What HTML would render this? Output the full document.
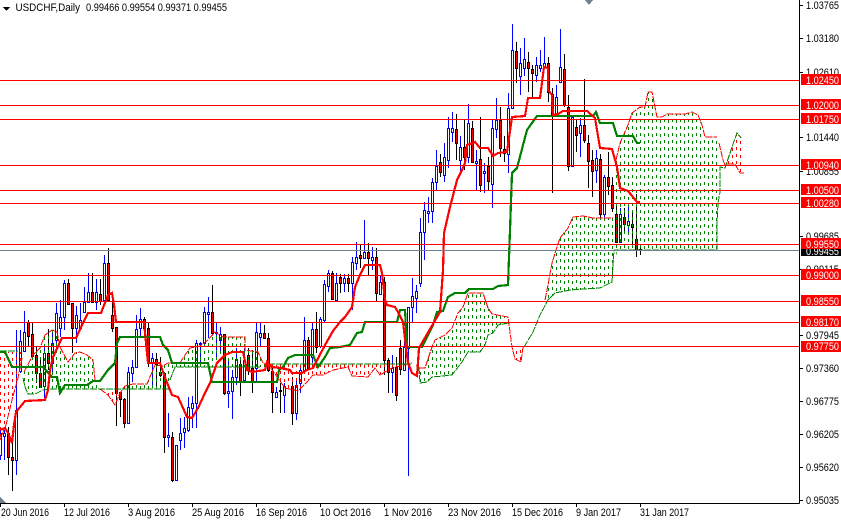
<!DOCTYPE html>
<html><head><meta charset="utf-8"><style>
html,body{margin:0;padding:0;background:#fff}
svg{display:block}
text{font-family:"Liberation Sans",sans-serif;font-size:11px;fill:#000}
.w{fill:#fff}
</style></head><body>
<svg width="841" height="520" viewBox="0 0 841 520" xmlns="http://www.w3.org/2000/svg" shape-rendering="crispEdges">
<defs>
<pattern id="g" width="8" height="7" patternUnits="userSpaceOnUse"><rect x="0" y="0" width="1" height="3" fill="#008000"/><rect x="4" y="1" width="1" height="3" fill="#008000"/></pattern>
<pattern id="r" width="8" height="7" patternUnits="userSpaceOnUse"><rect x="0" y="0" width="1" height="3" fill="#ff0000"/><rect x="4" y="1" width="1" height="3" fill="#ff0000"/></pattern>
</defs>
<rect width="841" height="520" fill="#fff"/>
<!-- wicks -->
<path fill="none" stroke="#0000ff" d="M0.5 427V460M4.5 430V460M16.5 330V475M20.5 330V373M24.5 311V352M44.5 347V398M52.5 330V373M56.5 303V348M60.5 300V337M64.5 280V330M76.5 306V343M80.5 303V328M84.5 287V313M88.5 273V303M96.5 279V310M104.5 255V300M128.5 367V423M132.5 360V382M136.5 315V363M140.5 308V338M152.5 353V387M168.5 413V447M176.5 445V481M180.5 418V450M184.5 417V448M188.5 397V432M192.5 396V428M196.5 340V428M200.5 342V363M204.5 307V345M208.5 297V338M216.5 323V357M220.5 327V352M228.5 360V408M232.5 370V419M236.5 348V385M244.5 348V382M256.5 323V382M260.5 323V347M276.5 387V397M284.5 383V413M296.5 380V420M300.5 365V393M304.5 317V373M312.5 323V363M320.5 317V348M324.5 280V322M328.5 270V292M336.5 273V302M344.5 274V292M352.5 257V310M356.5 242V270M364.5 220V257M372.5 247V270M380.5 275V295M392.5 355V393M404.5 338V370M408.5 307V476M412.5 278V322M416.5 285V313M420.5 218V287M424.5 202V260M428.5 197V223M432.5 178V223M436.5 150V190M444.5 143V182M448.5 117V168M452.5 112V142M460.5 136V175M468.5 104V163M476.5 150V190M484.5 163V193M492.5 120V208M496.5 98V138M508.5 93V173M512.5 24V108M520.5 48V95M524.5 38V76M536.5 57V82M540.5 50V72M544.5 37V68M556.5 85V115M560.5 29V83M572.5 117V166M580.5 118V157M596.5 150V183M604.5 175V220M620.5 208V243M628.5 203V235"/>
<path fill="none" stroke="#000" d="M8.5 427V475M12.5 433V491M28.5 320V347M32.5 322V357M36.5 347V383M40.5 357V388M48.5 329V370M68.5 279V305M72.5 303V353M92.5 273V302M100.5 279V305M108.5 248V300M112.5 300V332M116.5 327V426M120.5 392V417M124.5 398V428M144.5 317V338M148.5 323V367M156.5 353V387M160.5 357V377M164.5 373V453M172.5 432V482M212.5 285V335M224.5 334V395M240.5 360V396M248.5 348V375M252.5 350V393M264.5 325V338M268.5 333V372M272.5 367V413M280.5 383V413M292.5 377V425M308.5 337V368M316.5 312V353M332.5 271V300M340.5 274V293M348.5 274V292M360.5 245V268M368.5 243V275M376.5 248V302M384.5 277V375M388.5 358V393M396.5 357V401M400.5 340V375M440.5 154V177M456.5 114V160M464.5 120V170M472.5 121V163M480.5 117V192M488.5 157V190M500.5 107V157M504.5 136V162M516.5 42V83M528.5 52V92M532.5 65V97M548.5 57V102M552.5 88V193M564.5 54V107M568.5 95V171M576.5 120V152M584.5 79V143M588.5 135V188M592.5 150V197M600.5 154V220M608.5 152V195M612.5 177V212M616.5 205V243M624.5 208V233M632.5 213V245M636.5 194V257M640.5 245V255"/>
<!-- bodies -->
<path fill="#fff" stroke="#0000ff" d="M-.5 433.5h2v22h-2zM3.5 433.5h2v3h-2zM15.5 410.5h2v50h-2zM19.5 341.5h2v30h-2zM23.5 332.5h2v19h-2zM43.5 353.5h2v33h-2zM51.5 343.5h2v20h-2zM55.5 313.5h2v27h-2zM59.5 317.5h2v11h-2zM63.5 283.5h2v34h-2zM75.5 315.5h2v13h-2zM79.5 320.5h2v8h-2zM83.5 302.5h2v10h-2zM87.5 292.5h2v10h-2zM95.5 292.5h2v10h-2zM103.5 263.5h2v37h-2zM127.5 372.5h2v51h-2zM131.5 367.5h2v6h-2zM135.5 329.5h2v38h-2zM139.5 319.5h2v9h-2zM151.5 358.5h2v5h-2zM167.5 435.5h2v2h-2zM175.5 445.5h2v35h-2zM179.5 433.5h2v7h-2zM183.5 428.5h2v4h-2zM187.5 407.5h2v23h-2zM191.5 403.5h2v5h-2zM195.5 343.5h2v60h-2zM199.5 343.5h2v1h-2zM203.5 312.5h2v31h-2zM207.5 312.5h2v2h-2zM215.5 332.5h2v1h-2zM219.5 334.5h2v6h-2zM227.5 391.5h2v2h-2zM231.5 377.5h2v14h-2zM235.5 359.5h2v18h-2zM243.5 360.5h2v20h-2zM255.5 332.5h2v36h-2zM259.5 333.5h2v4h-2zM275.5 392.5h2v5h-2zM283.5 386.5h2v9h-2zM295.5 385.5h2v28h-2zM299.5 370.5h2v13h-2zM303.5 340.5h2v30h-2zM311.5 329.5h2v28h-2zM319.5 319.5h2v27h-2zM323.5 284.5h2v36h-2zM327.5 273.5h2v13h-2zM335.5 283.5h2v17h-2zM343.5 278.5h2v5h-2zM351.5 262.5h2v21h-2zM355.5 257.5h2v6h-2zM363.5 252.5h2v6h-2zM371.5 257.5h2v3h-2zM379.5 282.5h2v12h-2zM391.5 368.5h2v4h-2zM403.5 347.5h2v23h-2zM407.5 307.5h2v41h-2zM411.5 296.5h2v11h-2zM415.5 291.5h2v7h-2zM419.5 232.5h2v51h-2zM423.5 210.5h2v22h-2zM427.5 211.5h2v2h-2zM431.5 182.5h2v29h-2zM435.5 166.5h2v16h-2zM443.5 157.5h2v18h-2zM447.5 128.5h2v32h-2zM451.5 128.5h2v4h-2zM459.5 147.5h2v13h-2zM467.5 123.5h2v34h-2zM475.5 161.5h2v2h-2zM483.5 171.5h2v2h-2zM491.5 128.5h2v56h-2zM495.5 120.5h2v9h-2zM507.5 108.5h2v46h-2zM511.5 50.5h2v58h-2zM519.5 63.5h2v13h-2zM523.5 59.5h2v9h-2zM535.5 65.5h2v10h-2zM539.5 65.5h2v3h-2zM543.5 63.5h2v3h-2zM555.5 97.5h2v16h-2zM559.5 67.5h2v15h-2zM571.5 117.5h2v49h-2zM579.5 125.5h2v8h-2zM595.5 158.5h2v12h-2zM603.5 177.5h2v37h-2zM619.5 214.5h2v28h-2zM627.5 221.5h2v4h-2z"/>
<path fill="#ff0000" stroke="#000" d="M7.5 433.5h2v24h-2zM11.5 457.5h2v3h-2zM27.5 322.5h2v14h-2zM31.5 334.5h2v22h-2zM35.5 355.5h2v18h-2zM39.5 373.5h2v14h-2zM47.5 353.5h2v10h-2zM67.5 283.5h2v21h-2zM71.5 303.5h2v25h-2zM91.5 292.5h2v10h-2zM99.5 294.5h2v7h-2zM107.5 263.5h2v37h-2zM111.5 315.5h2v13h-2zM115.5 327.5h2v66h-2zM119.5 392.5h2v7h-2zM123.5 399.5h2v24h-2zM143.5 319.5h2v9h-2zM147.5 328.5h2v35h-2zM155.5 359.5h2v5h-2zM159.5 372.5h2v3h-2zM163.5 373.5h2v64h-2zM171.5 437.5h2v43h-2zM211.5 312.5h2v21h-2zM223.5 334.5h2v59h-2zM239.5 364.5h2v17h-2zM247.5 355.5h2v15h-2zM251.5 368.5h2v14h-2zM263.5 333.5h2v5h-2zM267.5 338.5h2v32h-2zM271.5 371.5h2v21h-2zM279.5 390.5h2v1h-2zM291.5 386.5h2v27h-2zM307.5 340.5h2v28h-2zM315.5 329.5h2v18h-2zM331.5 273.5h2v26h-2zM339.5 277.5h2v6h-2zM347.5 278.5h2v5h-2zM359.5 255.5h2v3h-2zM367.5 252.5h2v6h-2zM375.5 257.5h2v36h-2zM383.5 282.5h2v78h-2zM387.5 360.5h2v12h-2zM395.5 367.5h2v28h-2zM399.5 348.5h2v21h-2zM439.5 162.5h2v10h-2zM455.5 129.5h2v14h-2zM463.5 147.5h2v10h-2zM471.5 128.5h2v34h-2zM479.5 159.5h2v26h-2zM487.5 166.5h2v15h-2zM499.5 120.5h2v28h-2zM503.5 149.5h2v4h-2zM515.5 51.5h2v17h-2zM527.5 62.5h2v6h-2zM531.5 69.5h2v4h-2zM547.5 63.5h2v29h-2zM551.5 94.5h2v21h-2zM563.5 69.5h2v36h-2zM567.5 107.5h2v59h-2zM575.5 127.5h2v8h-2zM583.5 125.5h2v15h-2zM587.5 143.5h2v18h-2zM591.5 160.5h2v11h-2zM599.5 159.5h2v55h-2zM607.5 177.5h2v9h-2zM611.5 185.5h2v23h-2zM615.5 214.5h2v28h-2zM623.5 217.5h2v7h-2zM631.5 224.5h2v3h-2zM635.5 239.5h2v11h-2zM639.5 249.5h2v1h-2z"/>
<!-- cloud fills -->
<path fill="url(#r)" d="M0 352H22V358L18 378 12 400 6 425 0 440Z"/>
<path fill="url(#g)" d="M24 372L33 355 40 348 45 335 52 330 57 332 60 347 68 362 75 353 80 352 87 355 93 360 95 380 100 389H53L43 390 35 394H28L25 387 23 378Z"/>
<path fill="url(#r)" d="M100 389L108 395 115 405 120 393 125 386V389Z"/>
<path fill="url(#g)" d="M125 386L133 384H147L155 365 163 366 168 363H180L183 358 190 348 200 346 208 340 215 332 223 337H245V350L258 352 263 363 270 367H178L170 375 167 389H125Z"/>
<path fill="url(#r)" d="M268 364H412L392 368 380 375 375 368 368 377 352 376 348 367 333 370 323 375H313L307 382 298 391 285 388 268 367Z"/>
<path fill="url(#g)" d="M415 365L419 368H425L432 347 435 340 445 335 452 328 458 313 463 307 468 293H483L488 308 492 314 508 317 510 332 508 323 498 325 493 333 488 335 485 345 480 352H468L462 362 452 375 443 376 432 377 427 382 420 383 419 367Z"/>
<path fill="url(#r)" d="M512 347H524L521 362 515 359Z"/>
<path fill="url(#g)" d="M545 300L548 285 552 263 557 247 560 238 568 228 573 217 583 216 593 218H613L616 160 620 143 628 125 632 113 640 107H645L648 92H652L657 117H662L667 114H685L692 112 698 115 702 125 705 137H717L720 167V192L718 203 717 223V250H617L614 280 600 288 570 290 555 293 548 300Z"/>
<path fill="url(#r)" d="M727 164L732 147 737 133 744 140V173H740L735 165Z"/>
<!-- cloud borders -->
<path fill="none" stroke="#ff0000" stroke-dasharray="7 1" d="M22 358L18 378 12 400 6 425 0 440M24 372L33 355 40 348 45 335 52 330 57 332 60 347 68 362 75 353 80 352 87 355 93 360 95 380M100 389L108 395 115 405 120 393 125 386 133 384H147L155 365 163 366 168 363H180L183 358 190 348 200 346 208 340 215 332 223 337H245V350L258 352 263 363 270 367 285 388 298 391 307 382 313 375H323L333 370 348 367 352 376 368 377 375 368 380 375 392 368 412 363M419 368H425L432 347 435 340 445 335 452 328 458 313 463 307 468 293H483L488 308 492 314 508 317 510 332 512 347 515 359 521 362 523 347M545 300L548 285 552 263 557 247 560 238 568 228 573 217 583 216 593 218H613M616 160L620 143 628 125 632 113 640 107H645L648 92H652L657 117H662L667 114H685L692 112 698 115 702 125 705 137H717M719 143L723 160 725 165M727 164H735L740 173H744"/>
<path fill="none" stroke="#008000" stroke-dasharray="7 1" d="M0 351H18M23 378L25 387 28 394H35L43 390 53 389H170M170 380L175 367H260M268 364H412M419 367L420 383 427 382 432 377 443 376 452 375 462 362 468 352H480L485 345 488 335 493 333 498 325 508 323M524 347L533 332 540 315 548 300 555 293 570 290 600 288 612 282 614 250 717 250V223L718 203 720 192V167L725 168 732 147 737 133 741 138"/>
<!-- kijun -->
<path fill="none" stroke="#008000" stroke-width="2.2" d="M0 352H5L12 367H43L52 377H57L60 393 65 385H87L93 381H100L108 370 115 363 117 343 120 337H160L163 345 168 350 172 363H208L212 382H277L279 370 283 367 288 358 295 355H313L318 367 325 357 330 348 340 347 350 345 357 333 362 332 365 322H397L400 310H405L407 347H422L433 325 437 312 443 311 448 297 455 293H465L469 289H493L498 286 508 285 510 230 512 173 517 168 527 130 532 123 537 116H593L596 112 600 123H613L617 136H633L637 143H640"/>
<!-- tenkan -->
<path fill="none" stroke="#ff0000" stroke-width="2.2" d="M0 430L5 428 8 433 12 443 14 425 16 412 25 401 45 400 48 390 50 370 53 357 62 338H76L83 323 88 313H101L108 295 112 293 114 305 116 322H144L148 363H160L164 375 172 395 178 397 183 408 187 417 192 418 198 408 205 393 210 383 217 363 225 355 232 352H243L247 370 252 372 265 370 267 362 272 367 280 368 290 370 292 373H302L307 370 313 368 325 345 333 331 340 322 345 317 352 307 355 287 360 275 365 265H380L382 273 385 300 387 305 395 307 398 312 403 322 406 347 408 363 412 373 417 376 419 348 440 312 443 270 444 233 450 207 457 180 462 170 465 163 467 145 475 142 480 148H488L493 156 498 153 507 152 512 117 525 116 528 98H540L544 67 548 68V90L552 95 553 115 558 114 563 111H587L595 118 600 148 612 149 617 167 620 188 628 191 637 202H640"/>
<!-- grey price line -->
<path stroke="#708090" d="M0 250.5H799"/>
<!-- red horizontal levels -->
<path stroke="#ff0000" d="M0 80.5H799M0 105.5H799M0 119.5H799M0 165.5H799M0 190.5H799M0 203.5H799M0 244.5H799M0 275.5H799M0 301.5H799M0 322.5H799M0 346.5H799"/>
<!-- frame -->
<path stroke="#000" d="M799.5 0V503.5M0 503.5H799.5"/>
<path stroke="#000" d="M800 5.5h3M800 38.5h3M800 72.5h3M800 137.5h3M800 171.5h3M800 236.5h3M800 269.5h3M800 335.5h3M800 368.5h3M800 401.5h3M800 434.5h3M800 467.5h3M800 500.5h3M0.5 504V507M64.5 504V507M128.5 504V507M192.5 504V507M256.5 504V507M320.5 504V507M384.5 504V507M448.5 504V507M512.5 504V507M576.5 504V507M640.5 504V507"/>
<!-- markers -->
<path fill="#708090" d="M585 0H593L589 5Z"/>
<path fill="#708090" d="M0 497L6 503H0Z"/>
<path fill="#000" d="M3 7H10L6.5 11Z"/>
<!-- header -->
<g>
<text x="15.5" y="11" textLength="64.5" lengthAdjust="spacingAndGlyphs">USDCHF,Daily</text>
<text x="86" y="11" textLength="141" lengthAdjust="spacingAndGlyphs">0.99466 0.99554 0.99371 0.99455</text>
<!-- axis labels -->
<text x="806" y="9" textLength="33" lengthAdjust="spacingAndGlyphs">1.03765</text>
<text x="806" y="42" textLength="33" lengthAdjust="spacingAndGlyphs">1.03180</text>
<text x="806" y="76" textLength="33" lengthAdjust="spacingAndGlyphs">1.02610</text>
<text x="806" y="141" textLength="33" lengthAdjust="spacingAndGlyphs">1.01440</text>
<text x="806" y="175" textLength="33" lengthAdjust="spacingAndGlyphs">1.00855</text>
<text x="806" y="240" textLength="33" lengthAdjust="spacingAndGlyphs">0.99685</text>
<text x="806" y="273" textLength="33" lengthAdjust="spacingAndGlyphs">0.99115</text>
<text x="806" y="339" textLength="33" lengthAdjust="spacingAndGlyphs">0.97945</text>
<text x="806" y="372" textLength="33" lengthAdjust="spacingAndGlyphs">0.97360</text>
<text x="806" y="405" textLength="33" lengthAdjust="spacingAndGlyphs">0.96775</text>
<text x="806" y="438" textLength="33" lengthAdjust="spacingAndGlyphs">0.96205</text>
<text x="806" y="471" textLength="33" lengthAdjust="spacingAndGlyphs">0.95620</text>
<text x="806" y="504" textLength="33" lengthAdjust="spacingAndGlyphs">0.95035</text>
<rect x="801" y="247" width="40" height="9" fill="#000"/>
<text class="w" x="806" y="255" textLength="33" lengthAdjust="spacingAndGlyphs">0.99455</text>
<rect x="801" y="74" width="40" height="11" fill="#ff0000"/><text class="w" x="806" y="84" textLength="33" lengthAdjust="spacingAndGlyphs">1.02450</text>
<rect x="801" y="99" width="40" height="11" fill="#ff0000"/><text class="w" x="806" y="109" textLength="33" lengthAdjust="spacingAndGlyphs">1.02000</text>
<rect x="801" y="113" width="40" height="11" fill="#ff0000"/><text class="w" x="806" y="123" textLength="33" lengthAdjust="spacingAndGlyphs">1.01750</text>
<rect x="801" y="159" width="40" height="11" fill="#ff0000"/><text class="w" x="806" y="169" textLength="33" lengthAdjust="spacingAndGlyphs">1.00940</text>
<rect x="801" y="184" width="40" height="11" fill="#ff0000"/><text class="w" x="806" y="194" textLength="33" lengthAdjust="spacingAndGlyphs">1.00500</text>
<rect x="801" y="197" width="40" height="11" fill="#ff0000"/><text class="w" x="806" y="207" textLength="33" lengthAdjust="spacingAndGlyphs">1.00280</text>
<rect x="801" y="238" width="40" height="11" fill="#ff0000"/><text class="w" x="806" y="248" textLength="33" lengthAdjust="spacingAndGlyphs">0.99550</text>
<rect x="801" y="269" width="40" height="11" fill="#ff0000"/><text class="w" x="806" y="279" textLength="33" lengthAdjust="spacingAndGlyphs">0.99000</text>
<rect x="801" y="295" width="40" height="11" fill="#ff0000"/><text class="w" x="806" y="305" textLength="33" lengthAdjust="spacingAndGlyphs">0.98550</text>
<rect x="801" y="316" width="40" height="11" fill="#ff0000"/><text class="w" x="806" y="326" textLength="33" lengthAdjust="spacingAndGlyphs">0.98170</text>
<rect x="801" y="341" width="40" height="11" fill="#ff0000"/><text class="w" x="806" y="350" textLength="33" lengthAdjust="spacingAndGlyphs">0.97750</text>
<!-- date labels -->
<text x="1" y="516" textLength="48" lengthAdjust="spacingAndGlyphs">20 Jun 2016</text>
<text x="64" y="516" textLength="46" lengthAdjust="spacingAndGlyphs">12 Jul 2016</text>
<text x="128" y="516" textLength="47" lengthAdjust="spacingAndGlyphs">3 Aug 2016</text>
<text x="192" y="516" textLength="52" lengthAdjust="spacingAndGlyphs">25 Aug 2016</text>
<text x="256" y="516" textLength="51" lengthAdjust="spacingAndGlyphs">16 Sep 2016</text>
<text x="320" y="516" textLength="51" lengthAdjust="spacingAndGlyphs">10 Oct 2016</text>
<text x="384" y="516" textLength="48" lengthAdjust="spacingAndGlyphs">1 Nov 2016</text>
<text x="448" y="516" textLength="53" lengthAdjust="spacingAndGlyphs">23 Nov 2016</text>
<text x="512" y="516" textLength="51" lengthAdjust="spacingAndGlyphs">15 Dec 2016</text>
<text x="576" y="516" textLength="45" lengthAdjust="spacingAndGlyphs">9 Jan 2017</text>
<text x="640" y="516" textLength="49" lengthAdjust="spacingAndGlyphs">31 Jan 2017</text>
</g>
</svg>
</body></html>
